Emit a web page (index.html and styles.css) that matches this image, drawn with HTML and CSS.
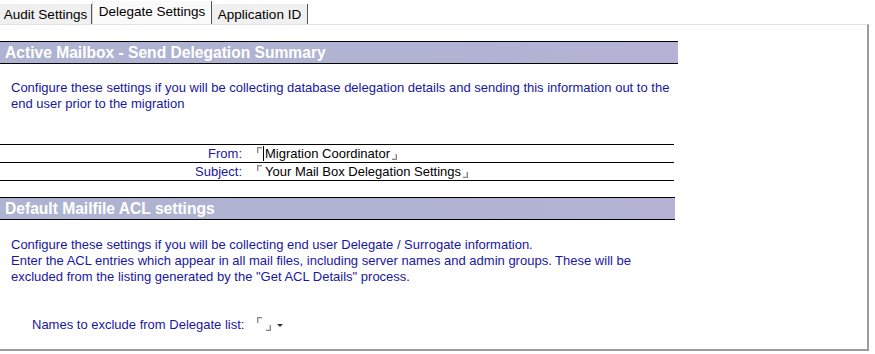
FILE: index.html
```html
<!DOCTYPE html>
<html lang="en">
<head>
    <meta charset="UTF-8">
    <title>Delegate Settings</title>
    <link rel="stylesheet" href="styles.css">
</head>
<body>
    <div class="tabs">
        <div class="tab tab-audit">Audit Settings</div>
        <div class="tab tab-delegate active">Delegate Settings</div>
        <div class="tab tab-appid">Application ID</div>
    </div>

    <div class="panel">
        <h2 class="section-head head-mailbox">Active Mailbox - Send Delegation Summary</h2>
        <p class="intro">Configure these settings if you will be collecting database delegation details and sending this information out to the<br>end user prior to the migration</p>

        <div class="fields">
            <div class="field-row">
                <span class="field-label">From:</span>
                <span class="field-value"><span class="mark-open"></span><span class="caret"></span>Migration Coordinator<span class="mark-close"></span></span>
            </div>
            <div class="field-row">
                <span class="field-label">Subject:</span>
                <span class="field-value"><span class="mark-open"></span>Your Mail Box Delegation Settings<span class="mark-close"></span></span>
            </div>
        </div>

        <h2 class="section-head head-acl">Default Mailfile ACL settings</h2>
        <p class="intro intro-acl">Configure these settings if you will be collecting end user Delegate / Surrogate information.<br>Enter the ACL entries which appear in all mail files, including server names and admin groups. These will be<br>excluded from the listing generated by the "Get ACL Details" process.</p>

        <div class="exclude-row">
            <span class="exclude-label">Names to exclude from Delegate list:</span>
            <span class="mark-open"></span><span class="mark-close"></span><span class="drop-arrow"></span>
        </div>
    </div>
</body>
</html>
```

FILE: styles.css
```css
body { margin: 0; background: #fff; color: #000; font-family: "Liberation Sans", Arial, sans-serif; font-size: 13px; }

.tabs { display: flex; align-items: flex-end; height: 24px; }
.tab { box-sizing: border-box; height: 20px; line-height: 21px; font-size: 13.5px; text-align: center; background: #f0f0f0; border-right: 1px solid #555; color: #000; }
.tab.active { height: 23px; line-height: 22px; background: #fafafa; border-left: 1px solid #d4d4d4; }
.tab-audit { width: 92px; }
.tab-delegate { width: 120px; }
.tab-appid { width: 96px; }

.panel { box-sizing: border-box; width: 869px; height: 327px; border-top: 1px solid #e2e2e2; border-right: 2px solid #9c9c9c; border-bottom: 2px solid #9c9c9c; }

.section-head { box-sizing: border-box; margin: 16px 0 0; height: 23px; padding-left: 5px; border-top: 1px solid #000; border-bottom: 1px solid #000; background: linear-gradient(to right, #adb3d0, #b4b3d5); color: #fff; font-size: 15.6px; font-weight: bold; line-height: 21px; }
.head-mailbox { width: 678px; }
.head-acl { width: 675px; }

.intro { margin: 16px 0 0; padding-left: 11px; color: #1717a0; line-height: 16px; }
.intro-acl { margin-top: 17px; }

.fields { width: 674px; margin-top: 32px; border-top: 1px solid #000; }
.field-row { display: grid; grid-template-columns: 245px 1fr; height: 18px; box-sizing: border-box; border-bottom: 1px solid #000; line-height: 17px; }
.field-label { padding-right: 3px; text-align: right; color: #1717a0; }
.field-value { padding-left: 12px; color: #000; }

.mark-open { display: inline-block; width: 4px; height: 5px; margin-right: 3px; vertical-align: top; margin-top: 2px; border-top: 1px solid #8a8a8a; border-left: 1px solid #8a8a8a; box-shadow: inset 1px 1px 0 #d0d0d0; }
.mark-close { display: inline-block; width: 4px; height: 5px; margin-left: 2px; vertical-align: -2px; border-bottom: 1px solid #8a8a8a; border-right: 1px solid #8a8a8a; box-shadow: inset -1px -1px 0 #d0d0d0; }
.caret { display: inline-block; width: 1px; height: 15px; margin-left: -2px; margin-right: 1px; vertical-align: -3px; background: #000; }

.exclude-row { display: flex; align-items: center; height: 16px; margin-top: 31px; padding-left: 32px; color: #1717a0; }
.exclude-label { margin-right: 13px; }
.exclude-row .mark-open { align-self: flex-start; margin-top: 1px; margin-right: 4px; }
.exclude-row .mark-close { align-self: flex-end; margin-left: 0; margin-bottom: 1px; }
.drop-arrow { width: 0; height: 0; margin-left: 6px; margin-top: 2px; border-left: 3px solid transparent; border-right: 3px solid transparent; border-top: 3px solid #333; }
```
